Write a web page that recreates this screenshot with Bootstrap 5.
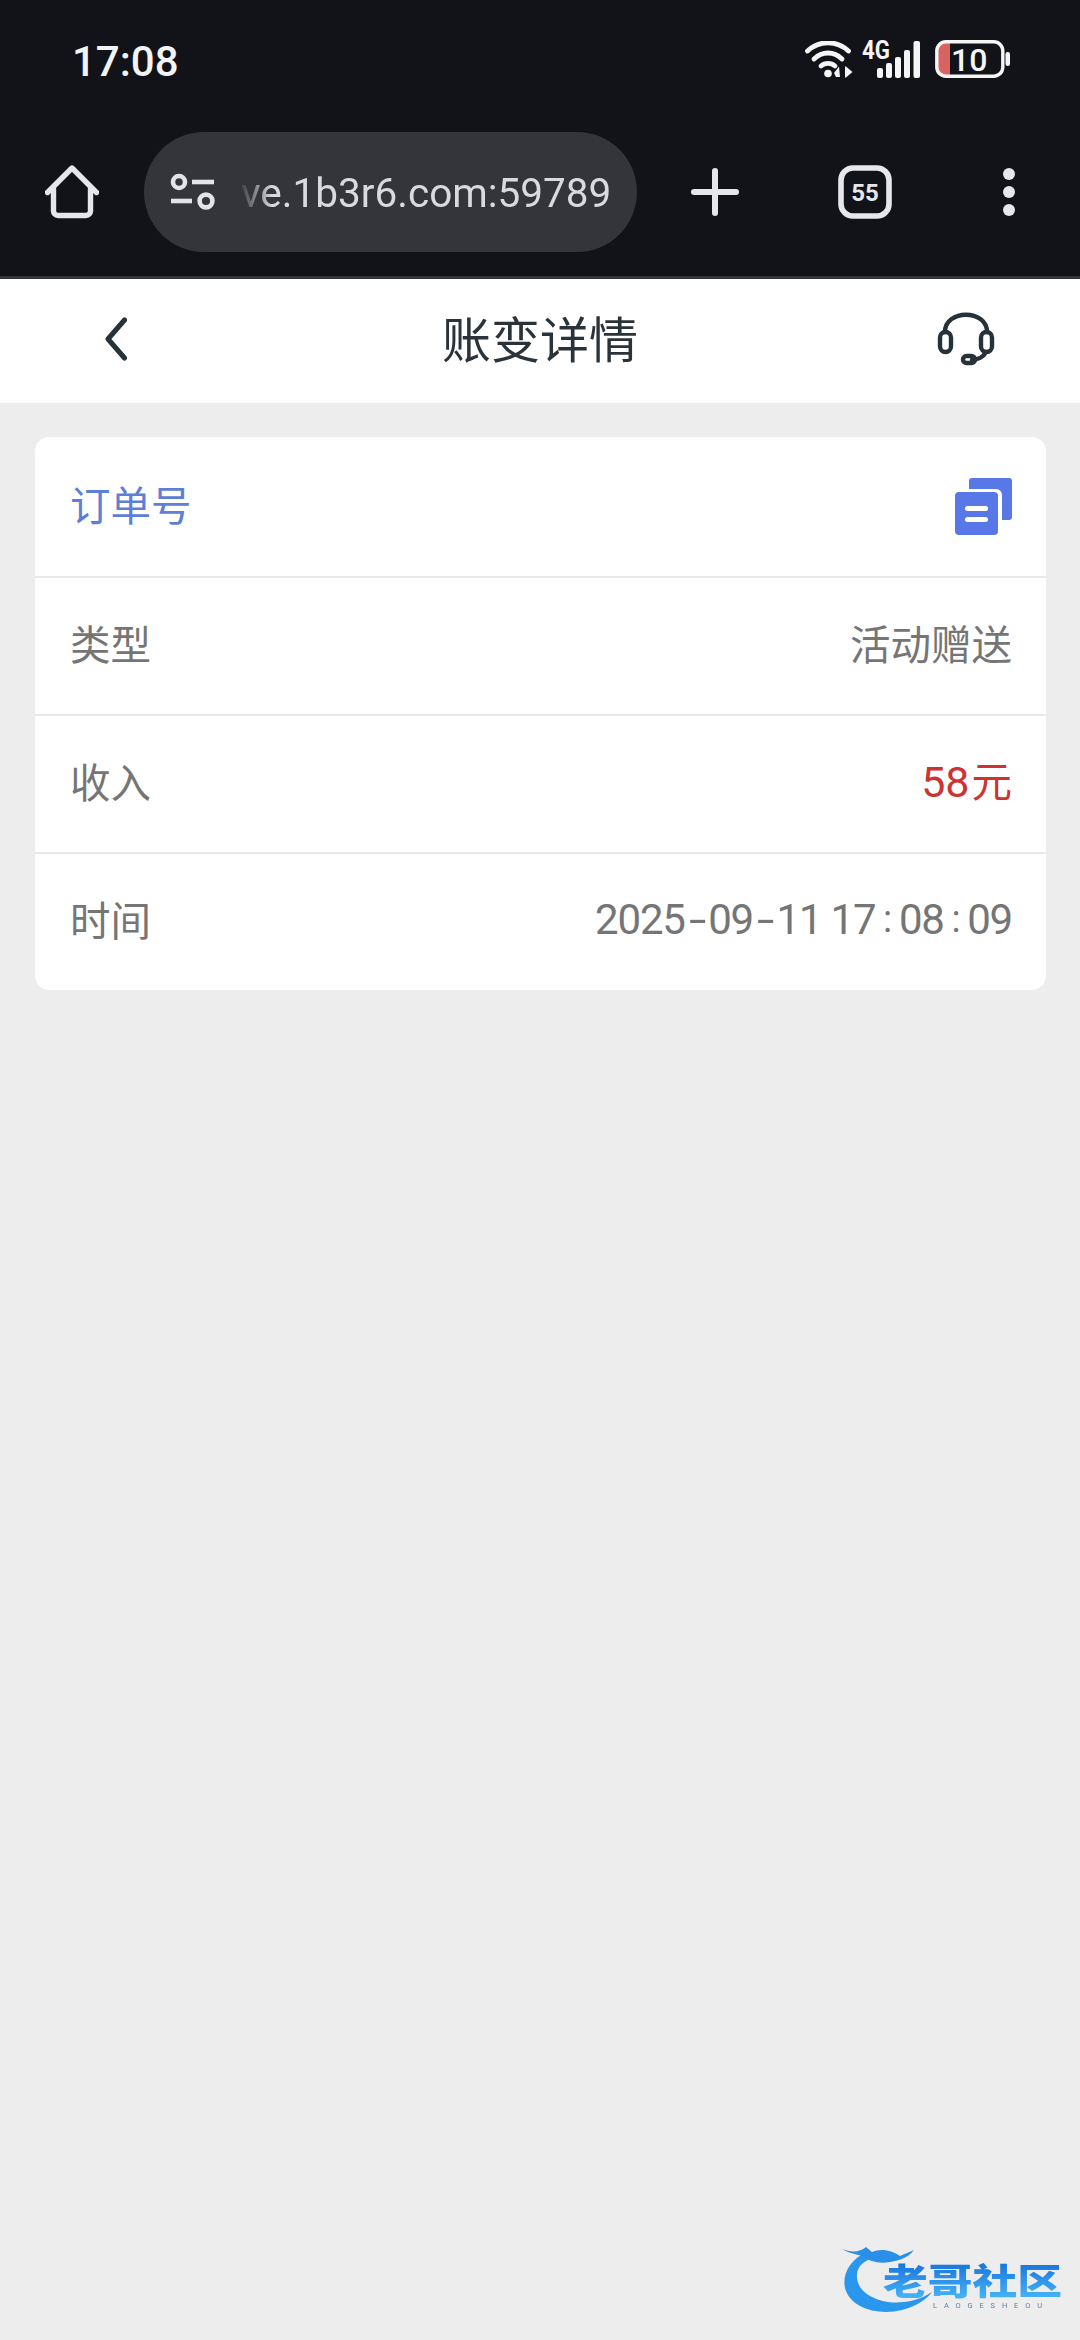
<!DOCTYPE html>
<html lang="zh-CN">
<head>
  <meta charset="UTF-8" />
  <meta name="viewport" content="width=device-width, initial-scale=1.0"/>
  <title>账变详情</title>
  <link href="https://cdn.jsdelivr.net/npm/bootstrap@5.3.3/dist/css/bootstrap.min.css" rel="stylesheet"/>
  <style>
    body {
      background-color: #ededed;
      font-family: "Noto Sans CJK SC", Roboto, sans-serif;
      min-height: 2340px;
      position: relative;
    }

    svg { display: block; flex-shrink: 0; }

    /* browser chrome */
    .chrome {
      background-color: #111318;
      height: 279px;
      border-bottom: 3px solid #35363a;
      font-family: Roboto, sans-serif;
    }

    .status-row {
      height: 118px;
      padding: 0 70px 0 72px;
    }

    .clock {
      font-size: 42px;
      font-weight: 500;
      color: #f2f3f5;
      line-height: 1;
      padding-top: 6px;
    }

    .wifi-icon { margin-right: 9px; }
    .signal-icon { margin-right: 15px; }

    .tool-row {
      margin-top: 14px;
      height: 120px;
      padding-left: 45px;
    }

    .url-pill {
      width: 493px;
      height: 120px;
      margin-left: 45px;
      background-color: #34353a;
      border-radius: 60px;
      padding-left: 26px;
    }

    .url-text {
      width: 375px;
      margin-left: 26px;
      padding-top: 2px;
      font-size: 40.5px;
      color: #d9dade;
      white-space: nowrap;
      overflow: hidden;
      -webkit-mask-image: linear-gradient(to right, rgba(0,0,0,.08) 0, #000 32px);
      mask-image: linear-gradient(to right, rgba(0,0,0,.08) 0, #000 32px);
    }

    .plus-icon { margin-left: 54px; }
    .tabs-icon { margin-left: 99px; }
    .dots-icon { margin-left: 111px; }

    /* page header */
    .page-head {
      height: 124px;
      background-color: #fff;
      padding: 0 85px 5px 85px;
    }

    .head-side { flex: 1 1 0; }

    .back-icon { margin-left: 20px; }

    .page-title {
      font-size: 49px;
      font-weight: 400;
      color: #2a333a;
      margin: 0;
      line-height: 1;
      padding-bottom: 5px;
    }

    /* detail card */
    .detail-card {
      margin: 34px 34px 0 35px;
      border: 0;
      border-radius: 14px;
      overflow: hidden;
    }

    .detail-row {
      height: 138px;
      padding: 0 34px 5px 35px;
      border: 0;
      border-bottom: 2px solid #e8e8e8;
      font-size: 40.5px;
      color: #757575;
      line-height: 1;
    }

    .detail-row:first-child { height: 141px; }
    .detail-row:last-child { border-bottom: 0; height: 136px; }

    .copy-icon { margin-top: 5px; }

    .order-label { color: #5f7fd6; }
    .money-text { color: #cc3333; }

    .num-text {
      font-family: Roboto, sans-serif;
      font-size: 42px;
      letter-spacing: -1.2px;
    }

    .money-text .num-text {
      font-size: 43px;
      letter-spacing: 0;
      margin-right: 2px;
    }

    .sep-char {
      display: inline-block;
      width: 23.5px;
      text-align: center;
    }

    .sep-dash { transform: scaleX(1.5); }

    .sep-colon {
      font-size: 38px;
      position: relative;
      top: -2px;
    }

    /* watermark sits over the page */
    .logo-mark {
      position: absolute;
      left: 820px;
      top: 2220px;
      filter: blur(.6px);
    }
  </style>
</head>
<body>
  <div class="chrome">
    <div class="status-row d-flex align-items-center">
      <span class="clock">17:08</span>
      <div class="ms-auto d-flex align-items-center">
        <svg class="wifi-icon" width="48" height="37" viewBox="0 0 48 37" fill="none" stroke="#f5f5f5" stroke-width="4.8" stroke-linecap="round">
          <path d="M2.5 10 C14 -1 32 -1 43.5 10"/>
          <path d="M9 18 C17 10 29 10 37 18"/>
          <path d="M16 25 C20 21.5 26 21.5 30 25"/>
          <circle cx="23" cy="32.5" r="3.8" fill="#f5f5f5" stroke="none"/>
          <path d="M29 32 L34 25.5 L35 36 L31 36 Z" fill="#f5f5f5" stroke="none"/>
          <path d="M40 25.5 L41 25.5 L47.5 31 L41 36.5 L40 36.5 Z" fill="#f5f5f5" stroke="none"/>
        </svg>
        <svg class="signal-icon" width="58" height="45" viewBox="-1 -4 58 45" fill="#f5f5f5">
          <text x="-1" y="18" font-family="Roboto, sans-serif" font-weight="700" font-size="25" textLength="28" lengthAdjust="spacingAndGlyphs">4G</text>
          <rect x="14" y="27" width="6" height="10" rx="2"/>
          <rect x="23" y="22" width="6" height="15" rx="2"/>
          <rect x="32" y="16" width="6" height="21" rx="2"/>
          <rect x="41" y="9" width="6" height="28" rx="2"/>
          <rect x="50.5" y="0" width="6.5" height="37" rx="2"/>
        </svg>
        <svg width="75" height="38" viewBox="0 0 75 38">
          <path d="M15 2 H9 a7 7 0 0 0 -7 7 V29 a7 7 0 0 0 7 7 H15 Z" fill="#d96262"/>
          <rect x="1.8" y="1.8" width="66" height="34.4" rx="9" fill="none" stroke="#f5f5f5" stroke-width="3.4"/>
          <rect x="70.5" y="12" width="4.5" height="14" rx="2.2" fill="#f5f5f5"/>
          <text x="16" y="31" font-family="Roboto, sans-serif" font-weight="500" font-size="32" fill="#f5f5f5">10</text>
        </svg>
      </div>
    </div>
    <div class="tool-row d-flex align-items-center">
      <svg width="54" height="54" viewBox="0 0 54 54" fill="none" stroke="#e6e7eb" stroke-width="5.4" stroke-linecap="round" stroke-linejoin="round">
        <path d="M2.5 27.5 L27 3 L51.5 27.5"/>
        <path d="M8.5 24 V46 a4.5 4.5 0 0 0 4.5 4.5 H41 a4.5 4.5 0 0 0 4.5 -4.5 V24"/>
      </svg>
      <div class="url-pill d-flex align-items-center">
        <svg width="45" height="38" viewBox="0 0 45 38" fill="none" stroke="#e3e4e8" stroke-width="4.6">
          <circle cx="9" cy="9" r="6"/>
          <path d="M22 9 H44"/>
          <path d="M1 28 H22"/>
          <circle cx="36" cy="28" r="6.4"/>
        </svg>
        <div class="url-text">ve.1b3r6.com:59789</div>
      </div>
      <svg class="plus-icon" width="48" height="48" viewBox="0 0 48 48" fill="none" stroke="#e6e7eb" stroke-width="6" stroke-linecap="round">
        <path d="M3 24 H45"/>
        <path d="M24 3 V45"/>
      </svg>
      <svg class="tabs-icon" width="54" height="54" viewBox="0 0 54 54">
        <rect x="3" y="3" width="48" height="48" rx="12" fill="none" stroke="#e6e7eb" stroke-width="5.6"/>
        <text x="27" y="35.5" text-anchor="middle" font-family="Roboto, sans-serif" font-weight="700" font-size="24" fill="#e6e7eb">55</text>
      </svg>
      <svg class="dots-icon" width="12" height="48" viewBox="0 0 12 48" fill="#e6e7eb">
        <circle cx="6" cy="6" r="6"/>
        <circle cx="6" cy="24" r="6"/>
        <circle cx="6" cy="42" r="6"/>
      </svg>
    </div>
  </div>

  <header class="page-head d-flex align-items-center">
    <div class="head-side">
      <svg class="back-icon" width="22" height="44" viewBox="0 0 22 44" fill="none" stroke="#26323a" stroke-width="5" stroke-linecap="round" stroke-linejoin="round">
        <path d="M19.5 3 L3 22 L19.5 41"/>
      </svg>
    </div>
    <h1 class="page-title">账变详情</h1>
    <div class="head-side d-flex justify-content-end">
      <svg width="58" height="54" viewBox="0 0 58 54" fill="none" stroke="#26323a" stroke-width="4.4" stroke-linecap="round">
        <path d="M8 20 C8 -3 50 -3 50 20"/>
        <rect x="3" y="20" width="11" height="20" rx="5.5"/>
        <rect x="44" y="20" width="11" height="20" rx="5.5"/>
        <path d="M49 40 C46 46 41 47 35 48"/>
        <rect x="26" y="44" width="12" height="7" rx="3.5"/>
      </svg>
    </div>
  </header>

  <div class="list-group detail-card">
    <div class="list-group-item detail-row d-flex align-items-center justify-content-between">
      <span class="order-label">订单号</span>
      <svg class="copy-icon" width="57" height="57" viewBox="0 0 57 57" fill="#5878e8">
        <path d="M14 3 a3 3 0 0 1 3 -3 H54 a3 3 0 0 1 3 3 V39 a3 3 0 0 1 -3 3 H47 V17 a6 6 0 0 0 -6 -6 H14 Z"/>
        <rect x="0" y="14" width="43" height="43" rx="4"/>
        <rect x="10" y="28" width="23" height="5" rx="2.5" fill="#fff"/>
        <rect x="10" y="39" width="23" height="5" rx="2.5" fill="#fff"/>
      </svg>
    </div>
    <div class="list-group-item detail-row d-flex align-items-center justify-content-between">
      <span>类型</span>
      <span>活动赠送</span>
    </div>
    <div class="list-group-item detail-row d-flex align-items-center justify-content-between">
      <span>收入</span>
      <span class="money-text"><span class="num-text">58</span>元</span>
    </div>
    <div class="list-group-item detail-row d-flex align-items-center justify-content-between">
      <span>时间</span>
      <span class="num-text">2025<span class="sep-char sep-dash">-</span>09<span class="sep-char sep-dash">-</span>11 17<span class="sep-char sep-colon">:</span>08<span class="sep-char sep-colon">:</span>09</span>
    </div>
  </div>

  <svg class="logo-mark" width="260" height="120" viewBox="0 0 260 120">
    <defs>
      <linearGradient id="logoFill" x1="0" y1="0" x2="0" y2="1">
        <stop offset="0.15" stop-color="#1570dc"/>
        <stop offset="0.85" stop-color="#45b2f6"/>
      </linearGradient>
    </defs>
    <path d="M46 32 C30 40 22 54 25 68 C30 88 58 96 82 90 C96 86 106 80 112 72 C100 80 84 84 68 82 C50 79 38 70 37 58 C36 48 42 42 52 38 Z" fill="#2a97ee"/>
    <path d="M22 29 C32 33 40 32 46 27 L52 32 C60 28 72 30 80 36 C84 34 90 32 94 30 C88 38 80 40 70 42 C60 44 50 42 42 36 C36 34 28 33 22 29 Z" fill="#2a8fe8"/>
    <text x="63" y="75" font-family="'Noto Sans CJK SC', sans-serif" font-weight="900" font-size="36" fill="url(#logoFill)" textLength="179" lengthAdjust="spacingAndGlyphs">老哥社区</text>
    <text x="113" y="88" font-family="Roboto, sans-serif" font-size="7.5" fill="#5a7fa8" textLength="109" lengthAdjust="spacing">LAOGESHEOU</text>
  </svg>

  <script src="https://cdn.jsdelivr.net/npm/bootstrap@5.3.3/dist/js/bootstrap.bundle.min.js"></script>
</body>
</html>
